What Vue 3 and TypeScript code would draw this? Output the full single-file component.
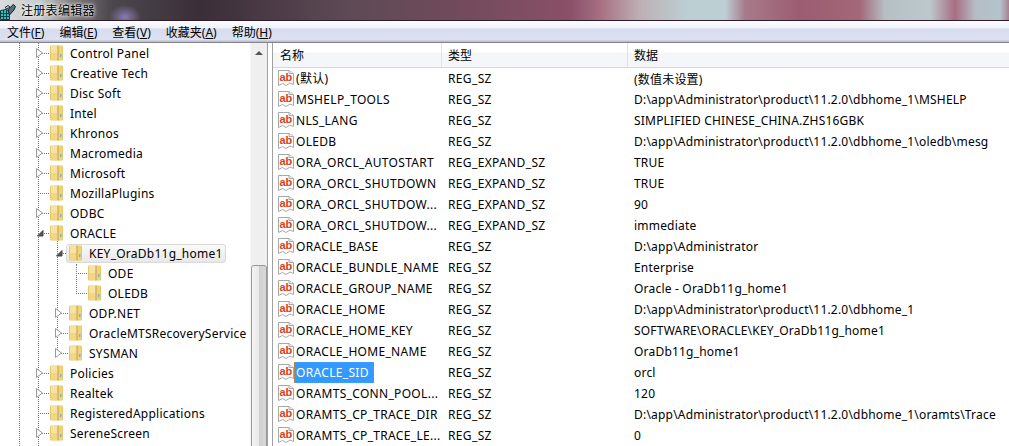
<script setup lang="ts">
interface TreeRow { name: string; depth: number; state: 'closed' | 'open' | 'leaf'; selected?: boolean }
interface ValueRow { name: string; type: string; data: string; selected?: boolean }

const ROOT = 'D:\\app\\Administrator\\product\\11.2.0\\dbhome_1'

const treeRows: TreeRow[] = [
  { name: 'Control Panel', depth: 1, state: 'closed' },
  { name: 'Creative Tech', depth: 1, state: 'closed' },
  { name: 'Disc Soft', depth: 1, state: 'closed' },
  { name: 'Intel', depth: 1, state: 'closed' },
  { name: 'Khronos', depth: 1, state: 'closed' },
  { name: 'Macromedia', depth: 1, state: 'closed' },
  { name: 'Microsoft', depth: 1, state: 'closed' },
  { name: 'MozillaPlugins', depth: 1, state: 'leaf' },
  { name: 'ODBC', depth: 1, state: 'closed' },
  { name: 'ORACLE', depth: 1, state: 'open' },
  { name: 'KEY_OraDb11g_home1', depth: 2, state: 'open', selected: true },
  { name: 'ODE', depth: 3, state: 'leaf' },
  { name: 'OLEDB', depth: 3, state: 'leaf' },
  { name: 'ODP.NET', depth: 2, state: 'closed' },
  { name: 'OracleMTSRecoveryService', depth: 2, state: 'closed' },
  { name: 'SYSMAN', depth: 2, state: 'closed' },
  { name: 'Policies', depth: 1, state: 'closed' },
  { name: 'Realtek', depth: 1, state: 'closed' },
  { name: 'RegisteredApplications', depth: 1, state: 'leaf' },
  { name: 'SereneScreen', depth: 1, state: 'closed' },
]

const guides = [
  { left: 19, top: 0, height: 403 },
  { left: 38, top: 0, height: 403 },
  { left: 57, top: 190, height: 121 },
  { left: 76, top: 221, height: 30 },
]

const valueRows: ValueRow[] = [
  { name: '(默认)', type: 'REG_SZ', data: '(数值未设置)' },
  { name: 'MSHELP_TOOLS', type: 'REG_SZ', data: ROOT + '\\MSHELP' },
  { name: 'NLS_LANG', type: 'REG_SZ', data: 'SIMPLIFIED CHINESE_CHINA.ZHS16GBK' },
  { name: 'OLEDB', type: 'REG_SZ', data: ROOT + '\\oledb\\mesg' },
  { name: 'ORA_ORCL_AUTOSTART', type: 'REG_EXPAND_SZ', data: 'TRUE' },
  { name: 'ORA_ORCL_SHUTDOWN', type: 'REG_EXPAND_SZ', data: 'TRUE' },
  { name: 'ORA_ORCL_SHUTDOW...', type: 'REG_EXPAND_SZ', data: '90' },
  { name: 'ORA_ORCL_SHUTDOW...', type: 'REG_EXPAND_SZ', data: 'immediate' },
  { name: 'ORACLE_BASE', type: 'REG_SZ', data: 'D:\\app\\Administrator' },
  { name: 'ORACLE_BUNDLE_NAME', type: 'REG_SZ', data: 'Enterprise' },
  { name: 'ORACLE_GROUP_NAME', type: 'REG_SZ', data: 'Oracle - OraDb11g_home1' },
  { name: 'ORACLE_HOME', type: 'REG_SZ', data: ROOT },
  { name: 'ORACLE_HOME_KEY', type: 'REG_SZ', data: 'SOFTWARE\\ORACLE\\KEY_OraDb11g_home1' },
  { name: 'ORACLE_HOME_NAME', type: 'REG_SZ', data: 'OraDb11g_home1' },
  { name: 'ORACLE_SID', type: 'REG_SZ', data: 'orcl', selected: true },
  { name: 'ORAMTS_CONN_POOL...', type: 'REG_SZ', data: '120' },
  { name: 'ORAMTS_CP_TRACE_DIR', type: 'REG_SZ', data: ROOT + '\\oramts\\Trace' },
  { name: 'ORAMTS_CP_TRACE_LE...', type: 'REG_SZ', data: '0' },
]

const menus = [
  { label: '文件', key: 'F' },
  { label: '编辑', key: 'E' },
  { label: '查看', key: 'V' },
  { label: '收藏夹', key: 'A' },
  { label: '帮助', key: 'H' },
]
</script>

<template>
  <div class="window">
    <header class="titlebar">
      <svg class="appicon" width="18" height="16" viewBox="0 0 18 16">
        <path d="M0.500 6.500L6 5.500L9.500 7V15.500H0.500z" fill="#35c0bc" stroke="#0b3f48" />
        <path d="M3.500 6v9.500M6.500 6v9.500M0.500 9.500h9M0.500 12.500h9" stroke="#0b3f48" />
        <path d="M8 6L12 1.500L13.500 0.500L15.500 2.500L14 6L9.500 11z" fill="#50707e" stroke="#16262c" />
        <path d="M5 3.500L8 1.500L10 3L7 5z" fill="#a8cad8" stroke="#22343c" />
      </svg>
      <span class="title">注册表编辑器</span>
    </header>

    <nav class="menubar">
      <span v-for="m in menus" :key="m.key" class="menu">{{ m.label }}(<u>{{ m.key }}</u>)</span>
    </nav>

    <main class="panes">
      <section class="tree">
        <div class="tree-list">
          <i
            v-for="g in guides"
            :key="g.left"
            class="guide"
            :style="{ left: g.left + 'px', top: g.top + 'px', height: g.height + 'px' }"
          />
          <div
            v-for="row in treeRows"
            :key="row.name"
            class="tree-row"
            :style="{ paddingLeft: 12 + row.depth * 19 + 'px' }"
          >
            <span class="exp">
              <i class="stub" />
              <svg v-if="row.state === 'closed'" class="tri" width="8" height="10" viewBox="0 0 8 10">
                <path d="M0.500 0.500L6.500 5L0.500 9.500z" fill="#fff" stroke="#999" />
              </svg>
              <svg v-else-if="row.state === 'open'" class="tri" width="8" height="10" viewBox="0 0 8 10">
                <path d="M7 2.500V8H1.500z" fill="#555" stroke="#444" stroke-width="1" />
              </svg>
            </span>
            <svg class="folder" width="13" height="16" viewBox="0 0 13 16">
              <rect x="0" y="0.500" width="13" height="15" rx="1" fill="#e8c86c" />
              <rect x="1" y="1" width="6.500" height="7" fill="#f6e2a2" />
              <rect x="1" y="8" width="6.500" height="7" fill="#f1d686" />
              <rect x="7.500" y="0.500" width="1" height="15" fill="#d2aa50" />
              <rect x="9" y="1" width="3" height="14" fill="#efd27c" />
              <rect x="10" y="9" width="1.500" height="3" fill="#7db4d4" />
            </svg>
            <span class="tree-label" :class="{ current: row.selected }">{{ row.name }}</span>
            <i v-if="row.selected" class="current-box" />
          </div>
        </div>
        <div class="scrollbar">
          <span class="arrow" />
          <span class="thumb" />
        </div>
      </section>

      <section class="values">
        <div class="value-row head">
          <span class="col name"><span class="head-text">名称</span></span>
          <span class="col type"><span class="head-text">类型</span></span>
          <span class="col data"><span class="head-text">数据</span></span>
        </div>
        <div v-for="(v, i) in valueRows" :key="i" class="value-row">
          <span class="col name">
            <svg class="ab" width="16" height="17" viewBox="0 0 16 17">
              <path d="M0.500 0.500H11L15.500 3.500V14.500L12 13L8 15.500L4.500 13.500L0.500 15.500z" fill="#fff" stroke="#a8a8a8" />
              <path d="M11 0.500V3.500H15.500" fill="#eee" stroke="#a8a8a8" />
              <text x="1.500" y="11" class="ab-text">ab</text>
            </svg>
            <span class="value-name" :class="{ selected: v.selected }">{{ v.name }}</span>
          </span>
          <span class="col type">{{ v.type }}</span>
          <span class="col data">{{ v.data }}</span>
        </div>
      </section>
    </main>
  </div>
</template>

<style>
html, body { margin: 0; overflow: hidden; background: #fff; }
</style>

<style scoped>
.window {
  width: 1009px;
  height: 446px;
  overflow: hidden;
  font-family: "Noto Sans", "Noto Sans CJK SC", sans-serif;
  font-size: 12px;
  color: #000;
  display: flex;
  flex-direction: column;
}
.titlebar {
  height: 20px;
  box-sizing: border-box;
  display: flex;
  align-items: center;
  gap: 3px;
  background:
    radial-gradient(ellipse 16px 12px at 125px 17px, #8a7ab0 0%, rgba(138, 122, 176, 0) 100%),
    linear-gradient(90deg, #d8dcdc 0, #c8cccc 40px, #7a7678 75px, #4c484e 110px, #3a2e38 200px, #5e4a56 350px, #6f4a5a 450px, #8a5068 570px, #a66f82 600px, #bdb0b4 640px, #bcd0d4 690px, #bcd0d4 725px, #a87a8a 745px, #9c5c72 800px, #a26878 860px, #b6c0c4 885px, #bcc8cc 930px, #a86e82 955px, #b4bcc4 975px, #b4c4cc 1000px, #a88090 1009px);
}
.appicon { flex: none; margin-top: 3px; }
.title {
  font-size: 12px;
  letter-spacing: 0.3px;
  text-shadow: 0 0 5px #fff, 0 0 3px #fff;
}
.menubar {
  height: 23px;
  box-sizing: border-box;
  display: flex;
  align-items: center;
  gap: 15px;
  padding: 0 0 0 7px;
  border-top: 1px solid #2e1c28;
  border-bottom: 1px solid #85858f;
  background: linear-gradient(180deg, #fafbfe 0, #f0f3fa 7px, #d6dcee 8px, #dde2f2 19px, #bdbdcc 20px, #bdbdcc 21px);
}
.menu { white-space: nowrap; }
.menu u { text-underline-offset: 1px; }
.panes {
  flex: 1;
  min-height: 0;
  display: flex;
  gap: 4px;
  background: #fff;
}
.tree {
  width: 268px;
  flex: none;
  display: flex;
  border-right: 1px solid #a0a0a0;
  box-sizing: border-box;
  background: #fff;
}
.tree-list {
  flex: 1;
  min-width: 0;
  position: relative;
  overflow: hidden;
}
.guide {
  position: absolute;
  width: 0;
  border-left: 1px dotted #777;
}
.tree-row {
  position: relative;
  height: 20px;
  display: flex;
  align-items: center;
}
.exp {
  position: relative;
  width: 19px;
  height: 20px;
  flex: none;
  display: flex;
  align-items: center;
}
.stub {
  position: absolute;
  left: 7px;
  right: 1px;
  top: 10px;
  border-top: 1px dotted #777;
}
.tri { position: relative; flex: none; margin-left: 5px; }
.folder { position: relative; z-index: 1; flex: none; }
.tree-label {
  position: relative;
  z-index: 1;
  margin-left: 7px;
  letter-spacing: 0.25px;
  white-space: nowrap;
}
.current-box {
  position: absolute;
  left: 66px;
  top: 1px;
  width: 160px;
  height: 19px;
  box-sizing: border-box;
  border: 1px solid #d9d9d9;
  border-radius: 3px;
  background: linear-gradient(180deg, #fafafa, #e8e8e8);
}
.scrollbar {
  width: 17px;
  flex: none;
  position: relative;
  background: #efefef;
  border-left: 1px solid #f6f6f6;
  box-sizing: border-box;
}
.arrow {
  position: absolute;
  left: 4px;
  top: 8px;
  width: 0;
  height: 0;
  border-left: 4px solid transparent;
  border-right: 4px solid transparent;
  border-bottom: 4px solid #555;
}
.thumb {
  position: absolute;
  left: 0;
  right: 0;
  top: 222px;
  bottom: -10px;
  box-sizing: border-box;
  border: 1px solid #989898;
  border-radius: 3px;
  background: linear-gradient(90deg, #f4f4f4 0, #e8e8e8 50%, #cfcfcf 50%, #d8d8d8 100%);
}
.values {
  flex: 1;
  min-width: 0;
  border-left: 1px solid #a0a0a0;
  overflow: hidden;
}
.value-row {
  height: 21px;
  display: flex;
  align-items: center;
  white-space: nowrap;
}
.value-row.head {
  height: 24px;
  background: linear-gradient(180deg, #fff 0, #fff 9px, #f5f6f9 10px, #f5f6f9 100%);
  border-bottom: 1px solid #d8d8dc;
}
.col { box-sizing: border-box; height: 100%; display: flex; align-items: center; flex: none; }
.col.name { width: 169px; padding-left: 5px; }
.col.type { width: 186px; padding-left: 6px; letter-spacing: 0.36px; }
.col.data { padding-left: 6px; letter-spacing: 0.2px; }
.head .col.name { padding-left: 7px; }
.head .col { letter-spacing: 0; }
.head .col.name, .head .col.type { border-right: 1px solid #e2e3ea; }
.ab { flex: none; }
.ab-text {
  font-family: "Liberation Sans", sans-serif;
  font-size: 11px;
  font-weight: 700;
  fill: #d8401c;
}
.value-name {
  padding-left: 2px;
  letter-spacing: 0.32px;
  line-height: 21px;
  height: 21px;
}
.value-name.selected {
  background: #3399ff;
  color: #fff;
  padding-right: 5px;
  outline: 1px dotted #b88a50;
  outline-offset: -1px;
}
</style>
